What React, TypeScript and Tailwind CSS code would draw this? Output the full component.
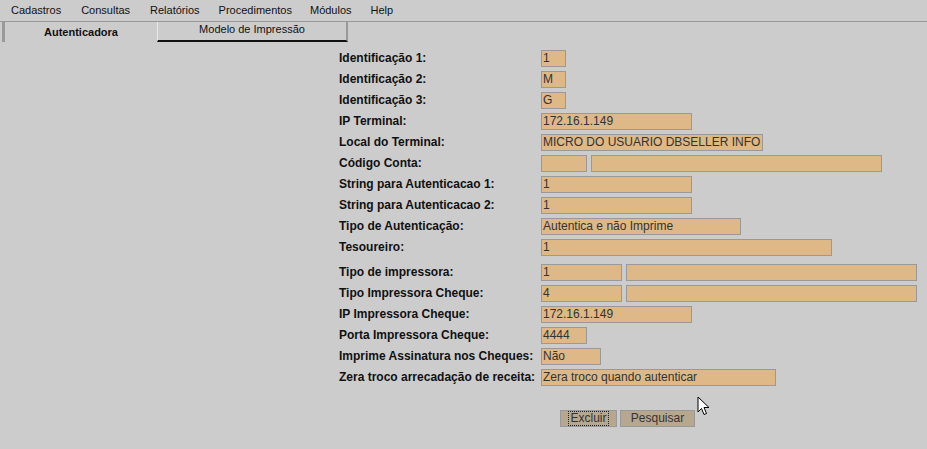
import React from "react";

const F = { fontFamily: '"Liberation Sans", Arial, sans-serif' };

function Inp({ w, v = "", ml = 0 }: { w: number; v?: string; ml?: number }) {
  return (
    <div
      className="h-[17px] border border-[#999999] bg-[#deb887] text-[12px] leading-[15px] text-[#333333] pl-[1px] overflow-hidden whitespace-nowrap shrink-0"
      style={{ width: w, marginLeft: ml }}
    >
      {v}
    </div>
  );
}

function Row({ label, children, mb = 4 }: { label: string; children: React.ReactNode; mb?: number }) {
  return (
    <div className="flex items-center h-[17px]" style={{ marginBottom: mb }}>
      <div className="w-[202px] shrink-0 text-[12px] font-bold text-[#111111] whitespace-nowrap leading-[17px]">{label}</div>
      {children}
    </div>
  );
}

export default function App() {
  return (
    <div className="relative w-[927px] h-[449px] bg-[#cccccc] overflow-hidden" style={F}>
      {/* menu bar */}
      <div className="h-[22px] border-b border-[#999999] flex items-center text-[11px] text-[#111111]">
        <span className="ml-[11px]">Cadastros</span>
        <span className="ml-[20px]">Consultas</span>
        <span className="ml-[20px]">Relatórios</span>
        <span className="ml-[19px]">Procedimentos</span>
        <span className="ml-[18px]">Módulos</span>
        <span className="ml-[19px]">Help</span>
      </div>
      {/* tabs */}
      <div className="flex h-[20px]">
        <div className="ml-[2px] w-[155px] h-[20px] border-l-[3px] border-[#999999] flex items-center justify-center text-[11px] font-bold text-[#111111] pt-[1px]">
          Autenticadora
        </div>
        <div className="w-[191px] h-[20px] border-l border-l-[#e8e8e8] border-r-[2px] border-r-[#999999] border-b-[2px] border-b-[#111111] flex justify-center text-[11px] text-[#111111] leading-[13px] pt-[1px]">
          Modelo de Impressão
        </div>
      </div>
      {/* form */}
      <div className="ml-[339px] mt-[8px] flex flex-col">
        <Row label="Identificação 1:"><Inp w={25} v="1" /></Row>
        <Row label="Identificação 2:"><Inp w={25} v="M" /></Row>
        <Row label="Identificação 3:"><Inp w={25} v="G" /></Row>
        <Row label="IP Terminal:"><Inp w={151} v="172.16.1.149" /></Row>
        <Row label="Local do Terminal:"><Inp w={222} v="MICRO DO USUARIO DBSELLER INFO" /></Row>
        <Row label="Código Conta:"><Inp w={46} /><Inp w={291} ml={4} /></Row>
        <Row label="String para Autenticacao 1:"><Inp w={151} v="1" /></Row>
        <Row label="String para Autenticacao 2:"><Inp w={151} v="1" /></Row>
        <Row label="Tipo de Autenticação:"><Inp w={200} v="Autentica e não Imprime" /></Row>
        <Row label="Tesoureiro:" mb={8}><Inp w={291} v="1" /></Row>
        <Row label="Tipo de impressora:"><Inp w={81} v="1" /><Inp w={291} ml={4} /></Row>
        <Row label="Tipo Impressora Cheque:"><Inp w={81} v="4" /><Inp w={291} ml={4} /></Row>
        <Row label="IP Impressora Cheque:"><Inp w={151} v="172.16.1.149" /></Row>
        <Row label="Porta Impressora Cheque:"><Inp w={46} v="4444" /></Row>
        <Row label="Imprime Assinatura nos Cheques:"><Inp w={60} v="Não" /></Row>
        <Row label="Zera troco arrecadação de receita:" mb={24}><Inp w={235} v="Zera troco quando autenticar" /></Row>
        <div className="flex ml-[221px] h-[17px]">
          <div className="w-[57px] h-[17px] bg-[#b8a78f] border border-[#999999] flex items-center justify-center text-[12px] text-[#333333]">
            <span className="border border-dotted border-[#222222] leading-[13px] px-[1px]">Excluir</span>
          </div>
          <div className="ml-[3px] w-[75px] h-[17px] bg-[#b8a78f] border border-[#999999] flex items-center justify-center text-[12px] text-[#333333] leading-[15px]">
            Pesquisar
          </div>
        </div>
      </div>
      {/* mouse cursor */}
      <svg className="absolute left-[697px] top-[396px]" width="14" height="20" viewBox="0 0 14 20">
        <path d="M1 1 L1 16 L4.5 12.5 L7 18.5 L9.5 17.5 L7 11.5 L12 11.5 Z" fill="#ffffff" stroke="#000000" strokeWidth="1" strokeLinejoin="miter" />
      </svg>
    </div>
  );
}
